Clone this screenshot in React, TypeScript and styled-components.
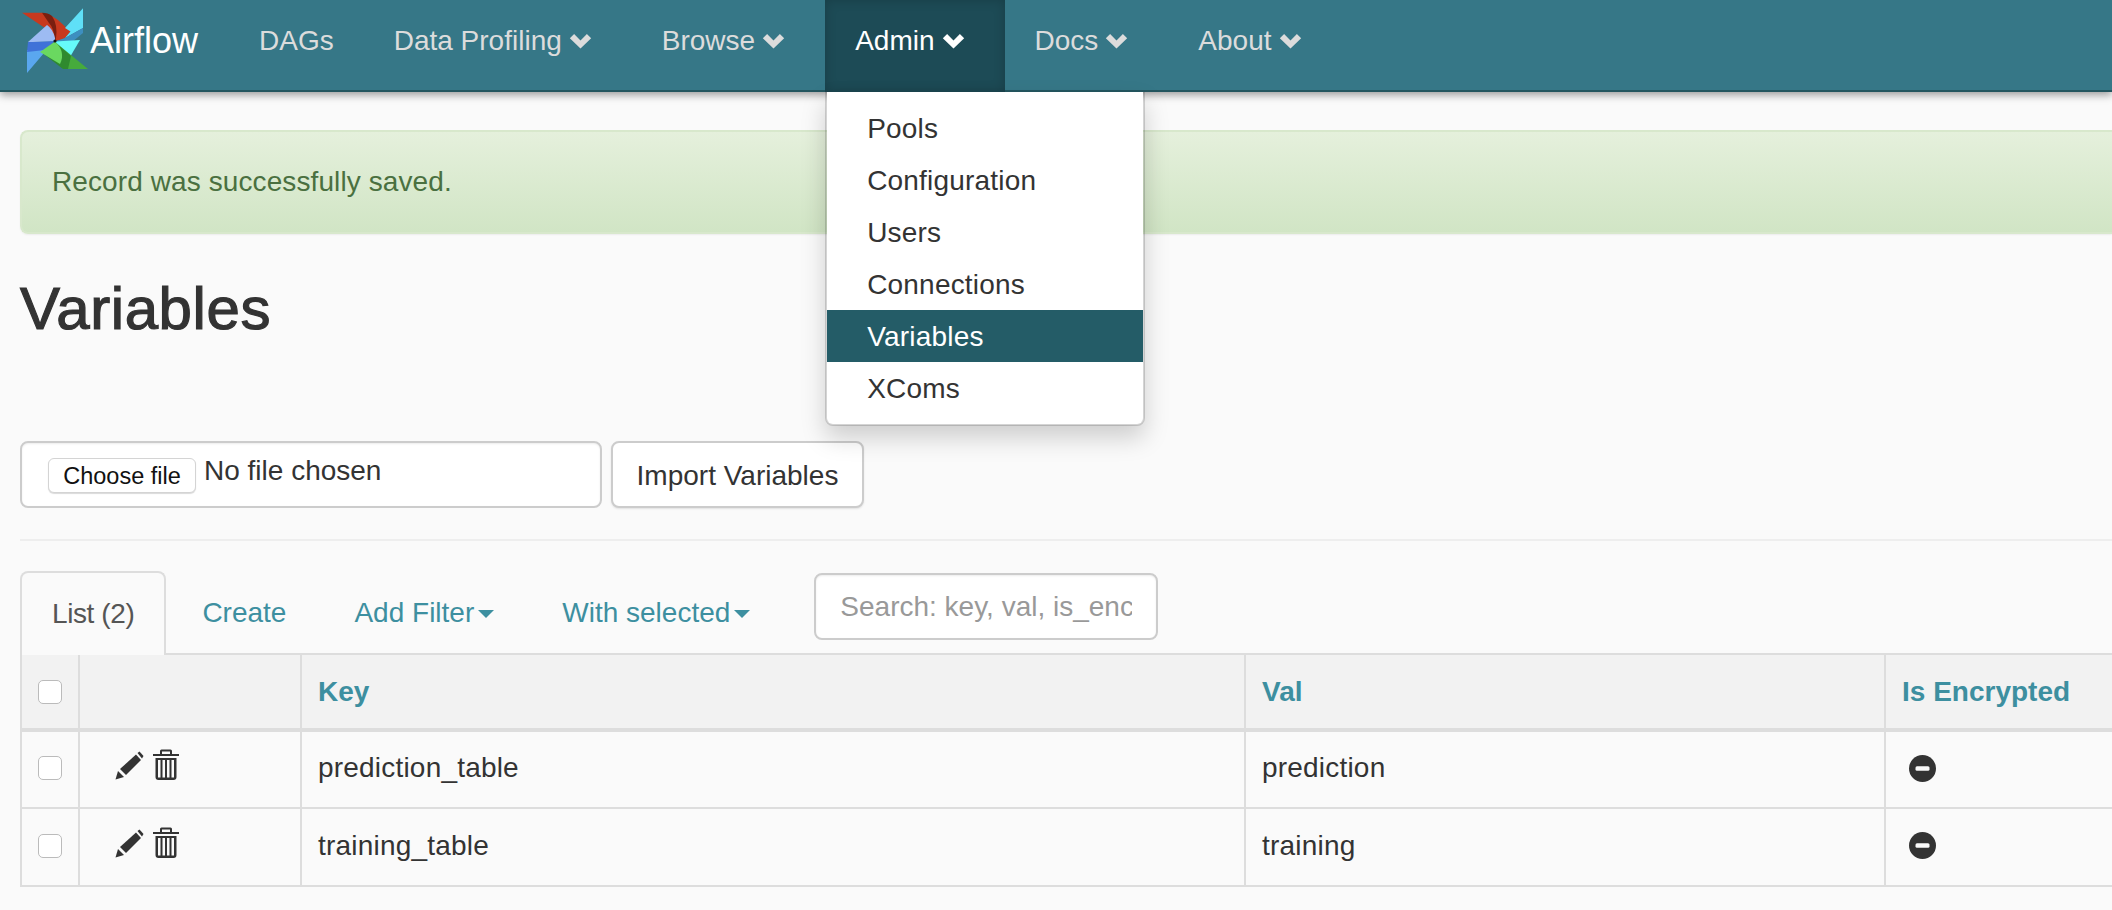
import { createGlobalStyle } from 'styled-components';
import styled from 'styled-components';

const C = {
  nav: '#367787',
  navEdge: '#23565f',
  navText: '#dcdcdc',
  navActive: '#1d4b56',
  page: '#fafafa',
  text: '#333333',
  link: '#3d8fa0',
  line: '#dddddd',
  highlight: '#245c67',
};

const GlobalStyle = createGlobalStyle`
  html, body {
    margin: 0;
    padding: 0;
    background: ${C.page};
    overflow: hidden;
  }
  body {
    font-family: "Liberation Sans", Arial, sans-serif;
    font-size: 28px;
    line-height: 40px;
    color: ${C.text};
  }
  * { box-sizing: border-box; }
`;

const Navbar = styled.nav`
  position: relative;
  z-index: 10;
  display: flex;
  height: 92px;
  padding-left: 22px;
  background: ${C.nav};
  border-bottom: 2px solid ${C.navEdge};
  box-shadow: 0 3px 8px rgba(0, 0, 0, 0.38);
`;

const Brand = styled.a`
  display: flex;
  align-items: center;
  width: 207px;
  padding-bottom: 8px;
  font-size: 36px;
  color: #ffffff;
  svg { margin: 0 1px 0 -1px; }
`;

const NavItem = styled.div<{ $active?: boolean }>`
  position: relative;
  display: flex;
  align-items: center;
  height: 92px;
  padding: 0 30px 10px;
  color: ${p => (p.$active ? '#ffffff' : C.navText)};
  background: ${p => (p.$active ? C.navActive : 'transparent')};
  box-shadow: ${p => (p.$active ? 'inset 0 0 12px rgba(0,0,0,0.18)' : 'none')};
`;

const Chevron = styled.svg`
  width: 23px;
  height: 16px;
  margin: 0 10px 0 7px;
  fill: currentColor;
`;

const Menu = styled.div`
  position: absolute;
  top: 92px;
  left: 0;
  width: 320px;
  padding: 10px 0;
  background: #ffffff;
  border: 2px solid rgba(0, 0, 0, 0.15);
  border-top: 0;
  border-radius: 0 0 8px 8px;
  box-shadow: 0 12px 24px rgba(0, 0, 0, 0.175);
  background-clip: padding-box;
`;

const MenuItem = styled.a<{ $active?: boolean }>`
  display: block;
  padding: 7px 40px 5px;
  letter-spacing: 0.2px;
  color: ${p => (p.$active ? '#ffffff' : C.text)};
  background: ${p => (p.$active ? C.highlight : 'transparent')};
`;

const Content = styled.main`
  padding: 38px 0 0 20px;
`;

const Alert = styled.div`
  height: 104px;
  padding: 30px;
  letter-spacing: 0.1px;
  color: #4a7040;
  background: linear-gradient(to bottom, #e5f0dc, #d1e5c5);
  border: 2px solid #d8e8cc;
  border-right: 0;
  border-radius: 8px 0 0 8px;
  box-shadow: 0 1px 2px rgba(0, 0, 0, 0.06);
`;

const Title = styled.h1`
  margin: 40px 0 0;
  height: 167px;
  font-size: 60px;
  line-height: 70px;
  font-weight: 400;
  letter-spacing: 0.6px;
  -webkit-text-stroke: 1.2px ${C.text};
`;

const ImportForm = styled.form`
  display: flex;
  gap: 9px;
  padding-bottom: 31px;
  border-bottom: 2px solid #eeeeee;
`;

const FileBox = styled.div`
  display: flex;
  align-items: flex-start;
  width: 582px;
  height: 67px;
  padding: 15px 0 0 26px;
  background: #ffffff;
  border: 2px solid #cccccc;
  border-radius: 8px;
  box-shadow: inset 0 1px 2px rgba(0, 0, 0, 0.075);
`;

const FileButton = styled.span`
  height: 35px;
  width: 148px;
  margin-right: 8px;
  font-size: 23.5px;
  line-height: 34px;
  text-align: center;
  color: #111111;
  background: #ffffff;
  border: 1px solid #d4d4d4;
  border-radius: 6px;
  box-shadow: 0 1px 1px rgba(0, 0, 0, 0.15);
`;

const FileName = styled.span`
  margin-top: -7px;
`;

const ImportButton = styled.button`
  width: 253px;
  height: 67px;
  padding: 2px 0 0;
  font: inherit;
  color: ${C.text};
  background: #ffffff;
  border: 2px solid #cccccc;
  border-radius: 8px;
  box-shadow: 0 1px 2px rgba(0, 0, 0, 0.1);
`;

const Tabs = styled.div`
  display: flex;
  align-items: flex-start;
  height: 84px;
  margin-top: 30px;
  border-bottom: 2px solid ${C.line};
`;

const Tab = styled.a<{ $active?: boolean }>`
  display: flex;
  align-items: center;
  height: ${p => (p.$active ? '84px' : '82px')};
  margin-right: 4px;
  padding: 0 30px;
  letter-spacing: ${p => (p.$active ? '-0.4px' : '0')};
  color: ${p => (p.$active ? '#555555' : C.link)};
  background: ${p => (p.$active ? C.page : 'transparent')};
  border: 2px solid ${p => (p.$active ? C.line : 'transparent')};
  border-bottom: 0;
  border-radius: 8px 8px 0 0;
`;

const Caret = styled.span`
  width: 0;
  height: 0;
  margin: 2px 0 0 4px;
  border-top: 8px solid ${C.link};
  border-left: 8px solid transparent;
  border-right: 8px solid transparent;
`;

const SearchInput = styled.input`
  width: 344px;
  height: 67px;
  margin: 2px 0 0 28px;
  padding: 0 24px;
  font: inherit;
  background: #ffffff;
  border: 2px solid #cccccc;
  border-radius: 8px;
  box-shadow: inset 0 1px 2px rgba(0, 0, 0, 0.075);
  &::placeholder { color: #999999; opacity: 1; }
`;

const Table = styled.table`
  width: 2100px;
  table-layout: fixed;
  border-collapse: collapse;
`;

const HeadCell = styled.th`
  height: 75px;
  padding: 0 16px;
  text-align: left;
  color: ${C.link};
  background: #f2f2f2;
  border: 2px solid ${C.line};
  border-top: 0;
  border-bottom-width: 4px;
`;

const Cell = styled.td`
  height: 78px;
  padding: 0 16px 3px;
  letter-spacing: 0.2px;
  border: 2px solid ${C.line};
`;

const Check = styled.span`
  display: block;
  width: 24px;
  height: 24px;
  background: #ffffff;
  border: 1px solid #bbbbbb;
  border-radius: 5px;
`;

const Actions = styled.div`
  display: flex;
  align-items: flex-end;
  gap: 9px;
  padding: 0 0 7px 19px;
  color: ${C.text};
  svg { fill: currentColor; display: block; }
`;

const rows = [
  { key: 'prediction_table', val: 'prediction' },
  { key: 'training_table', val: 'training' },
];

const menuItems = ['Pools', 'Configuration', 'Users', 'Connections', 'Variables', 'XComs'];

const Logo = () => (
  <svg width="68" height="68" viewBox="21 7 68 68">
    <path fill="#c8391e" d="M22 12.7 L42 12.7 Q50 14 58 20 L70.5 31.5 L65 38 Q61 40 55 41 Q50 30 42 26 Z" />
    <path fill="#7a1f10" d="M42 12.7 Q48 12.7 52 16 Q58 25 56 38 L55 41 Q54 28 49 23 Z" />
    <path fill="#5aa7ef" d="M27 73 L27 50 L32 50 L47 50 L44 53 Z" />
    <path fill="#3f72d8" d="M28 42 L55 41 L45 50 L27 52 Z" />
    <path fill="#9dbbf3" d="M28 42 L47 25 Q53 29 55 38 L55 41 L33 42 Z" />
    <path fill="#5fe0f7" d="M83 8.3 L83 28 L65 38 L70.5 31.5 L65 28 Z" />
    <path fill="#3d8fc0" d="M83 28 L83 33 L72 42 L55 41.5 L65 38 Z" />
    <path fill="#66fafa" d="M55 41.5 L80 40 L70 57 L57 50 Z" />
    <path fill="#46ab3c" d="M55 42 L88 69 L63 69 Z" />
    <path fill="#2f8a2f" d="M55 42 L71 56 L68 69 L63 69 L45 55 Z" />
    <path fill="#6ad860" d="M55 41.5 L40 52 L45 55 L60 64 Q66 52 55 41.5 Z" />
    <circle cx="55" cy="41" r="1.6" fill="#111" />
  </svg>
);

const NavChevron = () => (
  <Chevron viewBox="0 0 21 15">
    <path d="M0.5 5 L4.5 1 L10.5 7 L16.5 1 L20.5 5 L10.5 14.5 Z" />
  </Chevron>
);

const Pencil = () => (
  <svg width="29" height="29" viewBox="0 0 29 29">
    <path d="M0.5 28.5 L3 20 L9 26 Z" />
    <path d="M5 18 L21 3.5 L26 9 L11 24 Z" />
    <path d="M22.5 2 L24.5 0.5 L28.5 5 L27 7.5 Z" />
  </svg>
);

const Trash = () => (
  <svg width="26" height="31" viewBox="0 0 26 31">
    <path d="M0 5 H7 V2 Q7 0.5 8.5 0.5 H17.5 Q19 0.5 19 2 V5 H26 V7 H0 Z M9 5 H17 V2.5 H9 Z" fillRule="evenodd" />
    <path
      fillRule="evenodd"
      d="M2.5 9 H23.5 V28 Q23.5 31 20.5 31 H5.5 Q2.5 31 2.5 28 Z M5 11 V28.5 H7.5 V11 Z M9.5 11 V28.5 H12 V11 Z M14 11 V28.5 H16.5 V11 Z M18.5 11 V28.5 H21 V11 Z"
    />
  </svg>
);

const MinusIcon = styled.svg`
  display: block;
  margin-left: 7px;
`;

const MinusCircle = () => (
  <MinusIcon width="27" height="27" viewBox="0 0 27 27">
    <circle cx="13.5" cy="13.5" r="13.5" fill="#333333" />
    <rect x="6.5" y="11.2" width="14" height="4.6" rx="1.5" fill="#fafafa" />
  </MinusIcon>
);

export default function App() {
  return (
    <>
      <GlobalStyle />
      <Navbar>
        <Brand>
          <Logo />
          Airflow
        </Brand>
        <NavItem>DAGs</NavItem>
        <NavItem>Data Profiling<NavChevron /></NavItem>
        <NavItem>Browse<NavChevron /></NavItem>
        <NavItem $active>
          Admin<NavChevron />
          <Menu>
            {menuItems.map(m => (
              <MenuItem key={m} $active={m === 'Variables'}>{m}</MenuItem>
            ))}
          </Menu>
        </NavItem>
        <NavItem>Docs<NavChevron /></NavItem>
        <NavItem>About<NavChevron /></NavItem>
      </Navbar>
      <Content>
        <Alert>Record was successfully saved.</Alert>
        <Title>Variables</Title>
        <ImportForm>
          <FileBox>
            <FileButton>Choose file</FileButton>
            <FileName>No file chosen</FileName>
          </FileBox>
          <ImportButton type="button">Import Variables</ImportButton>
        </ImportForm>
        <Tabs>
          <Tab $active>List (2)</Tab>
          <Tab>Create</Tab>
          <Tab>Add Filter<Caret /></Tab>
          <Tab>With selected<Caret /></Tab>
          <SearchInput placeholder="Search: key, val, is_enc" />
        </Tabs>
        <Table>
          <colgroup>
            <col width="58" />
            <col width="222" />
            <col width="944" />
            <col width="640" />
            <col />
          </colgroup>
          <thead>
            <tr>
              <HeadCell><Check /></HeadCell>
              <HeadCell />
              <HeadCell>Key</HeadCell>
              <HeadCell>Val</HeadCell>
              <HeadCell>Is Encrypted</HeadCell>
            </tr>
          </thead>
          <tbody>
            {rows.map(r => (
              <tr key={r.key}>
                <Cell><Check /></Cell>
                <Cell><Actions><Pencil /><Trash /></Actions></Cell>
                <Cell>{r.key}</Cell>
                <Cell>{r.val}</Cell>
                <Cell><MinusCircle /></Cell>
              </tr>
            ))}
          </tbody>
        </Table>
      </Content>
    </>
  );
}
